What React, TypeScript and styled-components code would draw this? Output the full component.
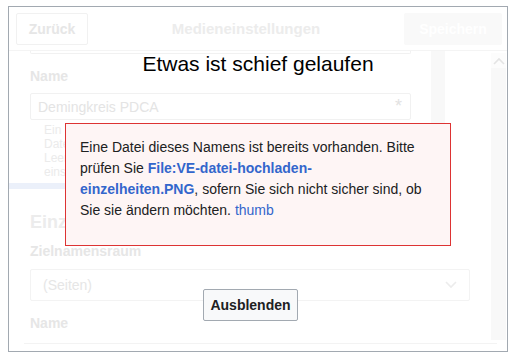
import React from 'react'
import styled, { createGlobalStyle } from 'styled-components'

const GlobalStyle = createGlobalStyle`
  html, body {
    margin: 0;
    padding: 0;
    background: #ffffff;
  }
  body {
    font-family: 'Liberation Sans', Arial, sans-serif;
    font-size: 14px;
    color: #202122;
  }
`

const Frame = styled.div`
  position: relative;
  box-sizing: border-box;
  width: 500px;
  height: 346px;
  margin: 6px 0 0 8px;
  border: 1px solid #a2a9b1;
  background: #ffffff;
  display: flex;
  flex-direction: column;
  overflow: hidden;
`

const Header = styled.div`
  height: 43px;
  flex: none;
  display: flex;
  align-items: center;
  padding: 0 5px 0 7px;
  border-bottom: 1px solid #f4f4f4;
`

const HeaderButton = styled.div<{ primary?: boolean }>`
  box-sizing: border-box;
  height: 32px;
  width: ${p => (p.primary ? '98px' : '72px')};
  display: flex;
  align-items: center;
  justify-content: center;
  border-radius: 2px;
  border: 1px solid ${p => (p.primary ? '#f9f9f9' : '#f1f1f1')};
  background: ${p => (p.primary ? '#f9f9f9' : '#ffffff')};
  color: ${p => (p.primary ? '#ffffff' : '#e6e6e6')};
  font-weight: bold;
  font-size: 14px;
`

const HeaderTitle = styled.div`
  flex: 1;
  text-align: center;
  font-weight: bold;
  font-size: 15px;
  color: #ececec;
`

const Body = styled.div`
  flex: 1;
  display: flex;
  flex-direction: column;
`

const MainRow = styled.div`
  height: 289px;
  display: flex;
`

const Content = styled.div`
  flex: 1;
  overflow: hidden;
  display: flex;
  flex-direction: column;
`

const TopRow = styled.div`
  display: flex;
  flex: none;
`

const LeftPane = styled.div`
  width: 422px;
  box-sizing: border-box;
  padding: 0 20px 4px 21px;
  border-bottom: 6px solid #ebf0fa;
  display: flex;
  flex-direction: column;
`

const Strip = styled.div`
  width: 14px;
  background: #f8f8f8;
`

const PrevInputTail = styled.div`
  height: 2px;
  border: 1px solid #f1f1f1;
  border-top: none;
  border-radius: 0 0 2px 2px;
`

const Label = styled.div<{ gap: number }>`
  margin-top: ${p => p.gap}px;
  line-height: 20px;
  font-weight: bold;
  font-size: 14px;
  color: #e6e6e6;
`

const Input = styled.div`
  box-sizing: border-box;
  margin-top: 7px;
  height: 27px;
  border: 1px solid #f1f1f1;
  border-radius: 2px;
  padding: 0 8px 0 7px;
  display: flex;
  align-items: center;
  justify-content: space-between;
  color: #e4e4e4;
  font-size: 14px;
`

const Asterisk = styled.span`
  font-size: 18px;
  color: #e2e2e2;
`

/* only the part left of the message box is ever visible */
const Help = styled.div`
  margin-top: 3px;
  margin-left: 14px;
  width: 21px;
  overflow: hidden;
  font-size: 12px;
  line-height: 14px;
  color: #ebebeb;
  white-space: nowrap;
`

const LowerSection = styled.div`
  padding-left: 21px;
  display: flex;
  flex-direction: column;
`

const SectionTitle = styled.div`
  margin-top: 21px;
  width: 35px;
  overflow: hidden;
  white-space: nowrap;
  line-height: 24px;
  font-size: 18px;
  font-weight: bold;
  color: #ececec;
`

const Select = styled.div`
  box-sizing: border-box;
  margin-top: 8px;
  width: 440px;
  height: 32px;
  border: 1px solid #f3f3f3;
  border-radius: 2px;
  padding: 0 12px;
  display: flex;
  align-items: center;
  justify-content: space-between;
  color: #e6e6e6;
`

const Scrollbar = styled.div`
  width: 15px;
  margin: 2px 1px 0 0;
  display: flex;
  flex-direction: column;
`

const ScrollButton = styled.div`
  height: 15px;
  display: flex;
  align-items: center;
  justify-content: center;
  background: #fcfcfc;
`

const ScrollTrack = styled.div`
  flex: 1;
  background: #f8f8f8;
`

const FooterLine = styled.div`
  margin: 3px 0 0 15px;
  width: 473px;
  border-top: 1px solid #f3f3f3;
`

const Overlay = styled.div`
  position: absolute;
  inset: 0;
  display: flex;
  flex-direction: column;
  align-items: center;
  padding-top: 44px;
`

const MessageTitle = styled.div`
  font-size: 21px;
  line-height: 25px;
  color: #000000;
`

const ErrorBox = styled.div`
  box-sizing: border-box;
  margin-top: 47px;
  width: 386px;
  height: 123px;
  padding: 13px 16px 24px 14px;
  border: 1px solid #dd3333;
  background: #fef5f5;
  font-size: 14px;
  line-height: 21px;
  color: #202122;
`

const Link = styled.a<{ strong?: boolean }>`
  color: #3366cc;
  text-decoration: none;
  font-weight: ${p => (p.strong ? 'bold' : 'normal')};
`

const DismissButton = styled.button`
  box-sizing: border-box;
  margin: 43px 15px 0 0;
  width: 95px;
  height: 32px;
  border: 1px solid #a2a9b1;
  border-radius: 2px;
  background: #f8f9fa;
  color: #202122;
  font-family: 'Liberation Sans', Arial, sans-serif;
  font-size: 14px;
  font-weight: bold;
  padding: 0;
`

const Chevron = ({ up }: { up?: boolean }) => (
  <svg width="12" height="8" viewBox="0 0 12 8">
    <path
      d={up ? 'M1 7 L6 2 L11 7' : 'M1 1 L6 6 L11 1'}
      fill="none"
      stroke={up ? '#e4e4e4' : '#ececec'}
      strokeWidth="1.6"
    />
  </svg>
)

const App = () => {
  return (
    <>
      <GlobalStyle />
      <Frame>
        <Header>
          <HeaderButton>Zurück</HeaderButton>
          <HeaderTitle>Medieneinstellungen</HeaderTitle>
          <HeaderButton primary>Speichern</HeaderButton>
        </Header>
        <Body>
          <MainRow>
            <Content>
              <TopRow>
                <LeftPane>
                  <PrevInputTail />
                  <Label gap={12}>Name</Label>
                  <Input>
                    <span>Demingkreis PDCA</span>
                    <Asterisk>*</Asterisk>
                  </Input>
                  <Help>
                    Ein
                    <br />
                    Dateiname
                    <br />
                    Leerzeichen
                    <br />
                    einschließlich
                  </Help>
                </LeftPane>
                <Strip />
              </TopRow>
              <LowerSection>
                <SectionTitle>Einzelheiten</SectionTitle>
                <Label gap={7}>Zielnamensraum</Label>
                <Select>
                  <span>(Seiten)</span>
                  <Chevron />
                </Select>
                <Label gap={12}>Name</Label>
              </LowerSection>
            </Content>
            <Scrollbar>
              <ScrollButton>
                <Chevron up />
              </ScrollButton>
              <ScrollTrack />
            </Scrollbar>
          </MainRow>
          <FooterLine />
        </Body>
        <Overlay>
          <MessageTitle>Etwas ist schief gelaufen</MessageTitle>
          <ErrorBox>
            Eine Datei dieses Namens ist bereits vorhanden. Bitte prüfen Sie{' '}
            <Link strong>
              File:VE-datei-hochladen-
              <br />
              einzelheiten.PNG
            </Link>
            , sofern Sie sich nicht sicher sind, ob Sie sie ändern möchten.{' '}
            <Link>thumb</Link>
          </ErrorBox>
          <DismissButton>Ausblenden</DismissButton>
        </Overlay>
      </Frame>
    </>
  )
}

export default App
